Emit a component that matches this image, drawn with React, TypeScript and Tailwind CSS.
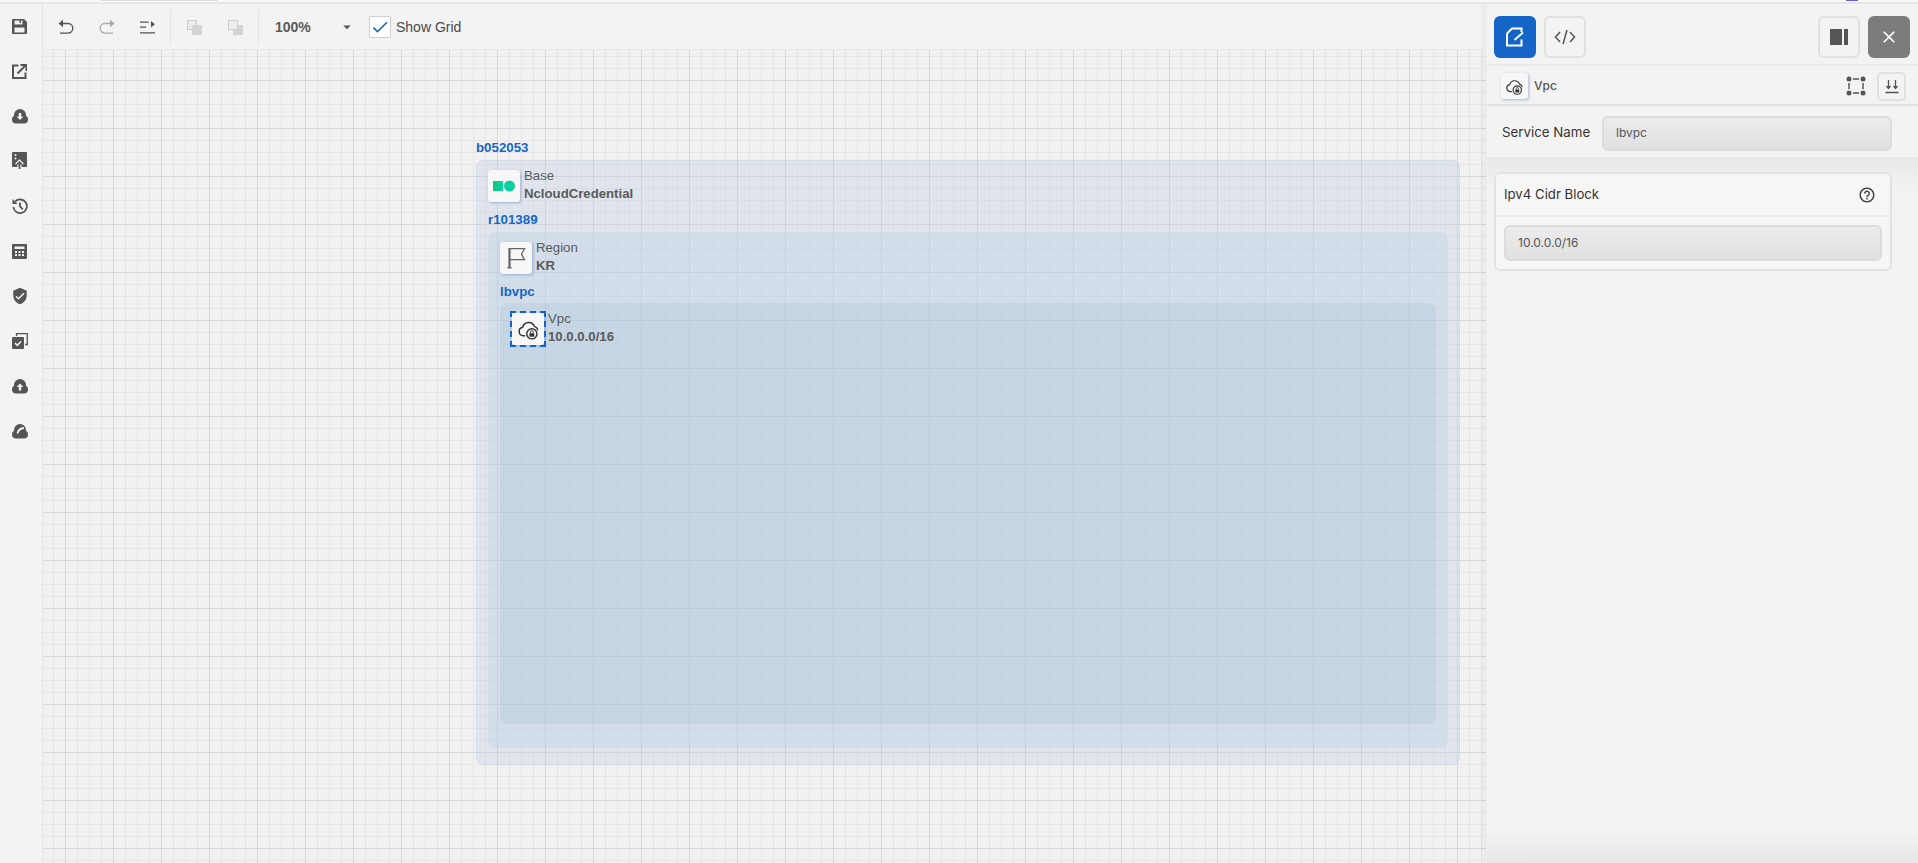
import React from 'react';
import { MdVerifiedUser, MdClose, MdArrowDropDown, MdCheck, MdOutlineHelpOutline } from 'react-icons/md';

const BG = '#f3f3f3';

const SaveIcon = () => (
  <svg width="15" height="15" viewBox="0 0 15 15">
    <path fill="#555" fillRule="evenodd" d="M1 0h11l3 3v11a1 1 0 0 1-1 1H1a1 1 0 0 1-1-1V1a1 1 0 0 1 1-1zM2.500 1.500v4h8v-4H9v2.500H7.500V1.500zM2.500 8.500v5h10v-5z" />
  </svg>
);

const OpenIcon = () => (
  <svg width="15" height="15" viewBox="0 0 15 15" fill="none" stroke="#555" strokeWidth="2">
    <path d="M6.500 1.500H1v12.500h12.500V8.500" />
    <path d="M5.500 9.500 13.500 1.500M8.500 1h6v6" />
  </svg>
);

const Blob = ({ children }: { children?: React.ReactNode }) => (
  <svg width="16" height="15" viewBox="0 0 16 15">
    <circle cx="8" cy="6" r="6" fill="#555" />
    <rect x="0" y="6.500" width="16" height="8" rx="4" fill="#555" />
    {children}
  </svg>
);

const ImageUploadIcon = () => (
  <svg width="15" height="18" viewBox="0 0 15 18">
    <path fill="#555" d="M1 0h13a1 1 0 0 1 1 1v13a1 1 0 0 1-1 1H1a1 1 0 0 1-1-1V1a1 1 0 0 1 1-1z" />
    <circle cx="3.500" cy="3" r="1" fill={BG} />
    <circle cx="3.500" cy="6.500" r="1" fill={BG} />
    <path d="M3.500 12 7.500 8l4 4M6 12.500V17.500h3V12.500" fill="#555" stroke={BG} strokeWidth="1.200" />
  </svg>
);

const HistoryIcon = () => (
  <svg width="16" height="16" viewBox="0 0 16 16" fill="none" stroke="#555" strokeWidth="1.800">
    <path d="M3.200 3.500A6.800 6.800 0 1 1 1.300 9" />
    <path d="M0.500 1 5.500 6H0.500z" fill="#555" stroke="none" />
    <path d="M8 4.500V8.500l2.800 2.800" />
  </svg>
);

const CalcIcon = () => (
  <svg width="15" height="15" viewBox="0 0 15 15">
    <rect width="15" height="15" rx="1" fill="#555" />
    <rect x="2.500" y="2.500" width="10" height="2.500" fill={BG} />
    {[3, 6.500, 10].map(x =>
      [7, 10].map(y => <rect key={`${x}-${y}`} x={x} y={y} width="2" height="2" fill={BG} />)
    )}
  </svg>
);

const LibraryCheckIcon = () => (
  <svg width="16" height="16" viewBox="0 0 16 16">
    <path d="M4.500 3V.7h10.800v10.800H13" fill="none" stroke="#555" strokeWidth="1.300" />
    <rect x="0" y="4" width="12" height="12" rx="1" fill="#555" />
    <path d="M3 10l2.300 2.300L9 8.500" fill="none" stroke={BG} strokeWidth="1.600" />
  </svg>
);

const UndoIcon = ({ color, flip }: { color: string; flip?: boolean }) => (
  <svg width="16" height="16" viewBox="0 0 16 16" className={flip ? '-scale-x-100' : ''}>
    <path d="M4 4.500h6a4.800 4.800 0 0 1 0 9.600H2" fill="none" stroke={color} strokeWidth="1.400" />
    <path d="M0.500 4.500 5 0.800v7.400z" fill={color} />
  </svg>
);

const CloudLockIcon = ({ size = 20 }: { size?: number }) => (
  <svg width={size} height={size} viewBox="0 0 24 24" fill="none" stroke="#333" strokeWidth="1.500">
    <path d="M8 18.500H6.500a4.500 4.500 0 0 1-.6-8.900A6.500 6.500 0 0 1 18.300 9a4 4 0 0 1 3.200 3.200" strokeLinecap="round" />
    <circle cx="15.500" cy="16.500" r="5.300" />
    <rect x="13" y="15.800" width="5" height="3.800" fill="#333" stroke="none" rx="0.500" />
    <path d="M14 15.800v-1a1.500 1.500 0 0 1 3 0v1" strokeWidth="1" />
  </svg>
);

const CredentialIcon = () => (
  <svg width="22" height="12" viewBox="0 0 22 12">
    <defs>
      <linearGradient id="cred" x1="0" y1="0" x2="1" y2="0">
        <stop offset="0" stopColor="#0fc77a" />
        <stop offset="1" stopColor="#0cd3a3" />
      </linearGradient>
    </defs>
    <rect x="0" y="1" width="10" height="10" fill="url(#cred)" />
    <circle cx="16.500" cy="6" r="5.500" fill="#0cd0a0" />
  </svg>
);

const FlagIcon = () => (
  <svg width="20" height="22" viewBox="0 0 20 22" fill="none" stroke="#666" strokeWidth="1.300">
    <path d="M3.500 1v20" strokeWidth="2.200" />
    <path d="M1.500 20.800h4" strokeWidth="1.500" />
    <path d="M3.500 1.700h15l-3 5.500 3 5.500h-15" />
  </svg>
);

const sideIcons = [
  <SaveIcon key="save" />,
  <OpenIcon key="open" />,
  <Blob key="down">
    <path d="M6.800 4h2.400v3.500H11.300L8 11 4.700 7.500H6.800z" fill={BG} />
  </Blob>,
  <ImageUploadIcon key="img" />,
  <HistoryIcon key="hist" />,
  <CalcIcon key="calc" />,
  <MdVerifiedUser key="shield" size={20} color="#555" />,
  <LibraryCheckIcon key="lib" />,
  <Blob key="up">
    <path d="M6.800 11.500H9.200V8H11.300L8 4.500 4.700 8H6.800z" fill={BG} />
  </Blob>,
  <Blob key="arc">
    <path d="M5.500 9.500C6 6.500 8.500 4.300 12 4" fill="none" stroke={BG} strokeWidth="1.800" />
  </Blob>,
];

const nodeBox =
  'flex h-8 w-8 shrink-0 items-center justify-center rounded-[3px] bg-[#f7f7f7] shadow-[1px_1px_3px_rgba(90,120,180,0.5)]';

const GroupText = ({ title, value }: { title: string; value: string }) => (
  <div className="-mt-[3px] ml-[4px] text-[13.200px] leading-[18px] text-[#5a5a5a] font-['Liberation_Sans',sans-serif]">
    <div>{title}</div>
    <div className="font-bold">{value}</div>
  </div>
);

const GroupLabel = ({ text }: { text: string }) => (
  <div className="text-[13.300px] font-bold leading-none text-[#1565c8] font-['Liberation_Sans',sans-serif]">{text}</div>
);

export default function App() {
  return (
    <div className="flex h-[863px] w-[1918px] flex-col overflow-hidden bg-[#f3f3f3] font-['Inter',sans-serif]">
      {/* browser strip */}
      <div className="relative h-[2px] shrink-0 bg-[#fafafa]">
        <div className="absolute left-[101px] top-0 h-[1px] w-[117px] bg-[#dcdcdc]" />
        <div className="absolute left-[1846px] top-0 h-[1px] w-[12px] bg-[#6a5ae0]" />
      </div>
      <div className="h-[2px] shrink-0 bg-[#e6e6e6]" />

      <div className="flex min-h-0 flex-1">
        {/* left sidebar */}
        <div className="flex w-[43px] shrink-0 flex-col items-center gap-[27px] border-r border-[#e4e4e4] pr-[3px] pt-[13px] text-[#555]">
          {sideIcons.map((icon, idx) => (
            <div key={idx} className="flex h-[18px] w-[18px] items-center justify-center">
              {icon}
            </div>
          ))}
        </div>

        {/* editor */}
        <div className="flex min-w-0 flex-1 flex-col">
          <div className="flex h-[46px] shrink-0 items-center border-b border-[#e8e8e8] pt-[1px] text-[#555]">
            <div className="flex items-center gap-[25px] pl-[15px] pr-[15px]">
              <UndoIcon color="#555" />
              <UndoIcon color="#aaa" flip />
              <svg width="15" height="13" viewBox="0 0 15 13" fill="#555">
                <path d="M0 0.500h8.500v1.300H0zM0 5.500h6v1.300H0zM0 11.200h15v1.300H0zM11 0l4 3.300-4 3.300z" />
              </svg>
            </div>
            <div className="h-[36px] w-px bg-[#e6e6e6]" />
            <div className="flex items-center gap-[26px] pl-[16px] pr-[15px]">
              <svg width="15" height="15" viewBox="0 0 15 15">
                <rect x="0.500" y="0.500" width="9" height="9" fill="#eaeaea" stroke="#ccc" />
                <rect x="5" y="5" width="10" height="10" fill="#d4d4d4" />
              </svg>
              <svg width="15" height="15" viewBox="0 0 15 15">
                <rect x="5" y="5" width="10" height="10" fill="#d4d4d4" />
                <rect x="0.500" y="0.500" width="9" height="9" fill="#eee" stroke="#ccc" />
              </svg>
            </div>
            <div className="h-[36px] w-px bg-[#e6e6e6]" />
            <div className="ml-[16px] flex w-[81px] items-center justify-between">
              <span className="text-[14px] font-bold text-[#5a5a5a] font-['Liberation_Sans',sans-serif]">100%</span>
              <MdArrowDropDown size={18} className="text-[#555]" />
            </div>
            <div className="ml-[13px] flex h-[22px] w-[22px] items-center justify-center rounded-[2px] border border-[#d0d0d0] bg-white">
              <MdCheck size={20} className="text-[#1a6bb5]" />
            </div>
            <span className="ml-[5px] text-[14px] text-[#4a4a4a] font-['Liberation_Sans',sans-serif]">Show Grid</span>
          </div>

          {/* canvas */}
          <div className="relative min-h-0 flex-1 bg-[#f1f1f1] bg-[linear-gradient(#d8d8d8_1px,transparent_1px),linear-gradient(90deg,#d8d8d8_1px,transparent_1px),linear-gradient(#e6e6e6_1px,transparent_1px),linear-gradient(90deg,#e6e6e6_1px,transparent_1px)] bg-[size:48px_48px,48px_48px,12px_12px,12px_12px] bg-[position:0_30px,22px_0,0_6px,10px_0]">
            <div className="absolute left-[433px] top-[91px]">
              <GroupLabel text="b052053" />
            </div>
            <div className="absolute left-[433px] top-[110px] h-[605px] w-[984px] rounded-[8px] bg-[rgba(190,205,230,0.32)] pl-[12px] pt-[10px] shadow-[inset_0_0_0_1px_rgba(170,190,220,0.2)]">
              <div className="flex items-start">
                <div className={nodeBox}>
                  <CredentialIcon />
                </div>
                <GroupText title="Base" value="NcloudCredential" />
              </div>
              <div className="absolute left-[12px] top-[53px]">
                <GroupLabel text="r101389" />
              </div>
              <div className="absolute left-[12px] top-[72px] h-[516px] w-[960px] rounded-[8px] bg-[rgba(170,200,225,0.24)] pl-[12px] pt-[10px]">
                <div className="flex items-start">
                  <div className={nodeBox}>
                    <FlagIcon />
                  </div>
                  <GroupText title="Region" value="KR" />
                </div>
                <div className="absolute left-[12px] top-[53px]">
                  <GroupLabel text="lbvpc" />
                </div>
                <div className="absolute left-[12px] top-[71px] h-[421px] w-[936px] rounded-[8px] bg-[rgba(140,180,205,0.18)] pl-[12px] pt-[10px]">
                  <div className="flex items-start">
                    <div className={`relative ${nodeBox}`}>
                      <CloudLockIcon size={23} />
                      <div className="absolute -inset-[2px] border-2 border-dashed border-[#1565c8]" />
                    </div>
                    <GroupText title="Vpc" value="10.0.0.0/16" />
                  </div>
                </div>
              </div>
            </div>
          </div>
        </div>

        {/* right panel */}
        <div className="relative flex w-[432px] shrink-0 flex-col border-l border-[#ededed] bg-[#f3f3f3] shadow-[-5px_0_0_rgba(0,0,0,0.025)]">
          <div className="flex h-[62px] shrink-0 justify-between border-b-2 border-[#e8e8e8] pl-[7px] pr-[8px] pt-[12px]">
            <div className="flex gap-[8px]">
              <div className="flex h-[42px] w-[42px] items-center justify-center rounded-[6px] bg-[#1565c8]">
                <svg width="22" height="22" viewBox="0 0 22 22" fill="none" stroke="#fff" strokeWidth="2">
                  <path d="M3 7.500 8 2.500h9.500v3.500M3 7.500V19.500h14.500v-6" />
                  <path d="M10.500 14 19 6.500" />
                </svg>
              </div>
              <div className="flex h-[42px] w-[42px] items-center justify-center rounded-[6px] border-2 border-[#e0e0e0]">
                <svg width="22" height="16" viewBox="0 0 22 16" fill="none" stroke="#555" strokeWidth="1.500">
                  <path d="M6 3 1.500 8 6 13M16 3l4.500 5-4.500 5M13 1 9 15" />
                </svg>
              </div>
            </div>
            <div className="flex gap-[8px]">
              <div className="flex h-[42px] w-[42px] items-center justify-center rounded-[6px] border-2 border-[#e0e0e0]">
                <svg width="18" height="16" viewBox="0 0 18 16" fill="#555">
                  <path d="M0 0h12v16H0zM14 0h4v16h-4z" />
                </svg>
              </div>
              <div className="flex h-[42px] w-[42px] items-center justify-center rounded-[6px] bg-[#7c7c7c]">
                <MdClose size={20} className="text-white" />
              </div>
            </div>
          </div>

          <div className="flex h-[40px] shrink-0 items-center border-b-2 border-[#e2e2e2] pl-[14px] pr-[12px] pt-[2px]">
            <div className="flex h-[26px] w-[27px] items-center justify-center rounded-[3px] bg-[#f7f7f7] shadow-[1px_1px_3px_rgba(90,120,180,0.5)]">
              <CloudLockIcon size={19} />
            </div>
            <span className="ml-[6px] text-[12px] font-medium text-[#555]">Vpc</span>
            <div className="ml-auto flex items-center gap-[11px]">
              <svg width="20" height="20" viewBox="0 0 20 20" fill="#555" stroke="#555">
                <circle cx="3" cy="3" r="2.500" stroke="none" />
                <circle cx="17" cy="3" r="2.500" stroke="none" />
                <circle cx="3" cy="17" r="2.500" stroke="none" />
                <circle cx="17" cy="17" r="2.500" stroke="none" />
                <path d="M7 3h6M7 17h6M3 7v6M17 7v6" strokeWidth="1.500" />
              </svg>
              <div className="flex h-[29px] w-[29px] items-center justify-center rounded-[5px] border-2 border-[#e0e0e0]">
                <svg width="14" height="15" viewBox="0 0 14 15" fill="none" stroke="#555" strokeWidth="1.300">
                  <path d="M3.500 1v8M1.500 7l2 2.500 2-2.500M10.500 1v8M8.500 7l2 2.500 2-2.500M0.500 13.500h13" />
                </svg>
              </div>
            </div>
          </div>

          <div className="flex h-[51px] shrink-0 items-center pl-[15px] pt-[3px]">
            <span className="text-[13.300px] text-[#333]">Service Name</span>
            <div className="ml-auto mr-[26px] flex h-[35px] w-[290px] items-center rounded-[6px] border-2 border-[#dcdcdc] bg-[linear-gradient(#ececec,#e0e0e0)] pl-[12px] text-[12px] text-[#555]">
              lbvpc
            </div>
          </div>

          <div className="flex-1 bg-[linear-gradient(#e9e9e9,#f3f3f3_36px,#f3f3f3_calc(100%_-_32px),#e6e6e6)] pl-[7px] pt-[15px]">
            <div className="w-[398px] rounded-[6px] border-2 border-[#e2e2e2] bg-[#f6f6f6]">
              <div className="flex h-[43px] items-center justify-between border-b-2 border-[#ededed] pl-[8px] pr-[14px]">
                <span className="text-[13.200px] text-[#333]">Ipv4 Cidr Block</span>
                <MdOutlineHelpOutline size={18} className="text-[#444]" />
              </div>
              <div className="px-[8px] py-[8px]">
                <div className="flex h-[36px] items-center rounded-[6px] border-2 border-[#dcdcdc] bg-[linear-gradient(#ececec,#e0e0e0)] pl-[12px] text-[12px] text-[#555]">
                  10.0.0.0/16
                </div>
              </div>
            </div>
          </div>
        </div>
      </div>
    </div>
  );
}
